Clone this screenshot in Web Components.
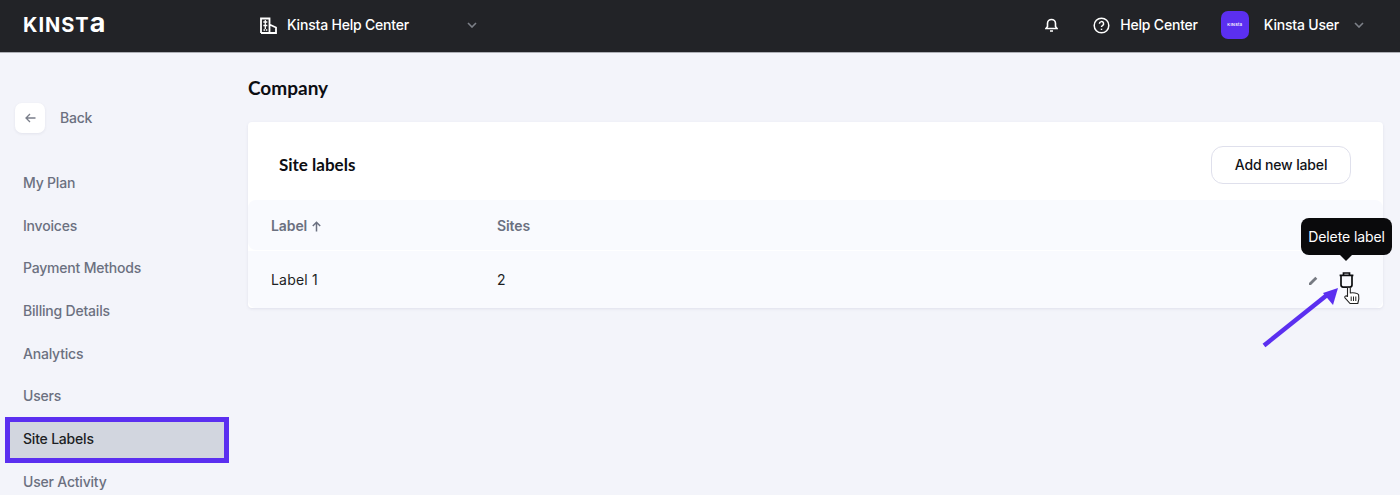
<!DOCTYPE html>
<html lang="en"><head><meta charset="utf-8"><title>Site labels</title>
<style>
html,body{margin:0;padding:0;height:495px;overflow:hidden;background:#f3f4fa;font-family:Inter,"Liberation Sans",sans-serif}
kh-app{display:block}
</style></head><body>
<kh-app></kh-app>
<script>
const def=(n,html)=>customElements.define(n,class extends HTMLElement{constructor(){super();this.attachShadow({mode:'open'}).innerHTML=html;}});
const chev=`<svg width="10" height="6" viewBox="0 0 10 6" fill="none" stroke="#7d8088" stroke-width="1.6"><path d="M1 1l4 4 4-4"/></svg>`;
def('kh-topbar',`<style>
:host{display:flex;align-items:center;height:50px;padding-bottom:2px;background:#222327;border-bottom:1px solid #aeb0b6;color:#fff;font:500 14px/20px Inter,sans-serif;letter-spacing:-.2px}
.logo{width:260px;padding-left:23px;box-sizing:border-box;font:700 20px/24px Inter,sans-serif;letter-spacing:1px;text-transform:uppercase;margin-top:-1px;white-space:nowrap}
.logo span{font-size:27px;text-transform:none;line-height:20px}
.co{display:flex;align-items:center;width:217px;gap:10px}
.co span{flex:1}
.right{margin-left:auto;display:flex;align-items:center;padding-right:36px}
.help{display:flex;align-items:center;gap:10px;margin-left:35px}
.ava{width:28px;height:28px;border-radius:7px;background:#5b2ff0;margin-left:23px;display:flex;align-items:center;justify-content:center;font:600 4px/6px Inter,sans-serif;letter-spacing:.3px}
.user{margin-left:15px;margin-right:15px}
</style>
<div class="logo">Kinst<span>a</span></div>
<div class="co"><svg width="17" height="17" viewBox="0 0 17 17" fill="none" stroke="#fff" stroke-width="1.8"><path d="M1 16V1.500h8.500V16M1 16h15V10.500L9.500 7.500"/><path d="M3.300 5h4M3.300 8.500h4M5.300 3v9" stroke-width="1.300"/><path d="M3.500 13h1.500M5.800 13h1.500" stroke-width="1.300"/></svg><span>Kinsta Help Center</span>${chev}</div>
<div class="right">
<svg width="13" height="14" viewBox="0 0 13 14" fill="none" stroke="#fff" stroke-width="1.600"><path d="M1 10.500h11l-1.500-2V5.500a4 4 0 0 0-8 0v3zM5 13h3"/></svg>
<div class="help"><svg width="17" height="17" viewBox="0 0 17 17" fill="none" stroke="#fff" stroke-width="1.500"><circle cx="8.500" cy="8.500" r="7.300"/><path d="M6.400 6.700a2.100 2.100 0 1 1 3 1.900c-.7.4-.9.800-.9 1.400"/><path d="M8.500 11.700v1.300"/></svg><span>Help Center</span></div>
<div class="ava">KINSta</div>
<div class="user">Kinsta User</div>${chev}
</div>`);
def('kh-nav-item',`<style>
:host{display:flex;align-items:center;height:42.700px;padding-left:23px;font:500 14px/20px Inter,sans-serif;letter-spacing:-.2px;color:#6b7080;position:relative}
:host([active]){color:#1d1f24}
:host([active])::before{content:"";position:absolute;left:5px;top:-1px;width:214px;height:36px;background:#d2d6df;border:5px solid #5b2ff0}
span{position:relative}
</style><span><slot></slot></span>`);
def('kh-sidebar',`<style>
:host{display:block;width:248px;flex:none;padding-top:50px;box-sizing:border-box}
.back{display:flex;align-items:center;gap:15px;margin-left:15px;margin-bottom:28.500px;color:#6b7080;font:500 14px/20px Inter,sans-serif;letter-spacing:-.2px}
.btn{width:30px;height:30px;border-radius:7px;background:#fff;display:flex;align-items:center;justify-content:center;box-shadow:0 1px 3px rgba(40,40,80,.08)}
</style>
<div class="back"><div class="btn"><svg width="11" height="10" viewBox="0 0 11 10" fill="none" stroke="#7a7e8a" stroke-width="1.300"><path d="M10.500 5H1M5 1 1 5l4 4"/></svg></div>Back</div>
<slot></slot>`);
def('kh-button',`<style>
:host{display:flex;align-items:center;justify-content:center;width:140px;height:38px;box-sizing:border-box;border:1px solid #dfe0ec;border-radius:12px;background:#fff;color:#111318;font:500 14px/20px Inter,sans-serif;letter-spacing:-.15px}
</style><slot></slot>`);
def('kh-table',`<style>
:host{display:block;font:400 14px/20px Inter,sans-serif;color:#1d1f24;position:relative}
.row{display:grid;grid-template-columns:226px 1fr auto;align-items:center;padding:0 23px;background:#f9fafe}
.head{height:50px;box-sizing:border-box;padding-top:2px;border-radius:8px;font-weight:600;color:#6b7080;margin-bottom:1px;letter-spacing:-.1px}
.body{height:57px;border-radius:0 0 8px 8px;letter-spacing:.2px}
.acts{display:flex;align-items:center;gap:21px;padding-right:6px;margin-top:1px}
.up{margin-left:4px;vertical-align:-1px}
</style>
<div class="row head"><div>Label<svg class="up" width="11" height="11" viewBox="0 0 11 11" fill="none" stroke="#6b7080" stroke-width="1.500"><path d="M5.500 10.500V1.500M1.800 5l3.700-3.700L9.200 5"/></svg></div><div>Sites</div><div></div></div>
<div class="row body"><div>Label 1</div><div>2</div>
<div class="acts"><svg width="9" height="9" viewBox="0 0 9 9"><path d="M0 9V7L6.300.7l2 2L2 9z" fill="#777a82"/></svg>
<svg width="15" height="16" viewBox="0 0 15 16" fill="none" stroke="#0c0d10" stroke-width="1.700"><path d="M.6 3.300h13.800M4.500 3V1h6v2M2 3.300v9.500c0 1.300.8 2.300 2.100 2.300h6.800c1.300 0 2.100-1 2.100-2.300V3.300"/></svg></div></div>`);
def('kh-card',`<style>
:host{display:block;background:#fff;border-radius:4px;box-shadow:0 1px 3px rgba(60,60,110,.1)}
.top{display:flex;align-items:center;justify-content:space-between;height:78px;padding:8px 32px 0 31px;box-sizing:border-box}
h2{margin:0;font:700 17px/22px Lato,sans-serif;color:#0c0d12}
</style>
<div class="top"><h2><slot name="title"></slot></h2><slot name="action"></slot></div><slot></slot>`);
def('kh-tooltip',`<style>
:host{position:absolute;display:block;left:1301px;top:218px;width:91px;height:37px;box-sizing:border-box;background:#0a0a0c;color:#fff;border-radius:8px;font:400 14px/37px Inter,sans-serif;letter-spacing:-.1px;text-align:center;white-space:nowrap}
:host::after{content:"";position:absolute;left:39px;bottom:-6px;border:6px solid transparent;border-bottom:0;border-top-color:#0a0a0c}
</style><slot></slot>`);
def('kh-annot',`<style>
:host{position:absolute;display:block;left:0;top:0;width:1400px;height:495px;pointer-events:none}
svg{position:absolute}
</style>
<svg style="left:1255px;top:280px" width="90" height="72" viewBox="0 0 90 72"><path d="M9 65.500 72 15" stroke="#5b2ff0" stroke-width="4.500" fill="none"/><path d="M83 8 68 13 78 25z" fill="#5b2ff0"/></svg>
<svg style="left:1344px;top:286px" width="16" height="19" viewBox="0 0 16 19"><path d="M3.500 10.500V2.300c0-1.600 2.800-1.600 2.800 0V7c2.400-.6 7.300 0 8.300 1.700.5 2.200.2 5.400-.8 8.800H6L1 11.800c-.9-1.300.9-2.700 2.500-1.300z" fill="#fff" stroke="#222" stroke-width="1.100" stroke-linejoin="round"/><path d="M7.200 10.500v4.500M9.500 10.500v4.500M11.800 10.500v4.500" stroke="#222" stroke-width="1"/></svg>`);
def('kh-app',`<style>
:host{display:block;width:1400px;height:495px;position:relative;overflow:hidden}
.wrap{display:flex;height:442px}
main{flex:none;width:1135px}
h1{margin:0;padding-top:23px;height:46px;font:700 19px/24px Lato,sans-serif;color:#0c0d12}
</style>
<kh-topbar></kh-topbar>
<div class="wrap">
<kh-sidebar>
<kh-nav-item>My Plan</kh-nav-item><kh-nav-item>Invoices</kh-nav-item><kh-nav-item>Payment Methods</kh-nav-item><kh-nav-item>Billing Details</kh-nav-item><kh-nav-item>Analytics</kh-nav-item><kh-nav-item>Users</kh-nav-item><kh-nav-item active>Site Labels</kh-nav-item><kh-nav-item>User Activity</kh-nav-item>
</kh-sidebar>
<main><h1>Company</h1>
<kh-card><span slot="title">Site labels</span><kh-button slot="action">Add new label</kh-button><kh-table></kh-table></kh-card>
</main></div>
<kh-tooltip>Delete label</kh-tooltip><kh-annot></kh-annot>`);
</script></body></html>
